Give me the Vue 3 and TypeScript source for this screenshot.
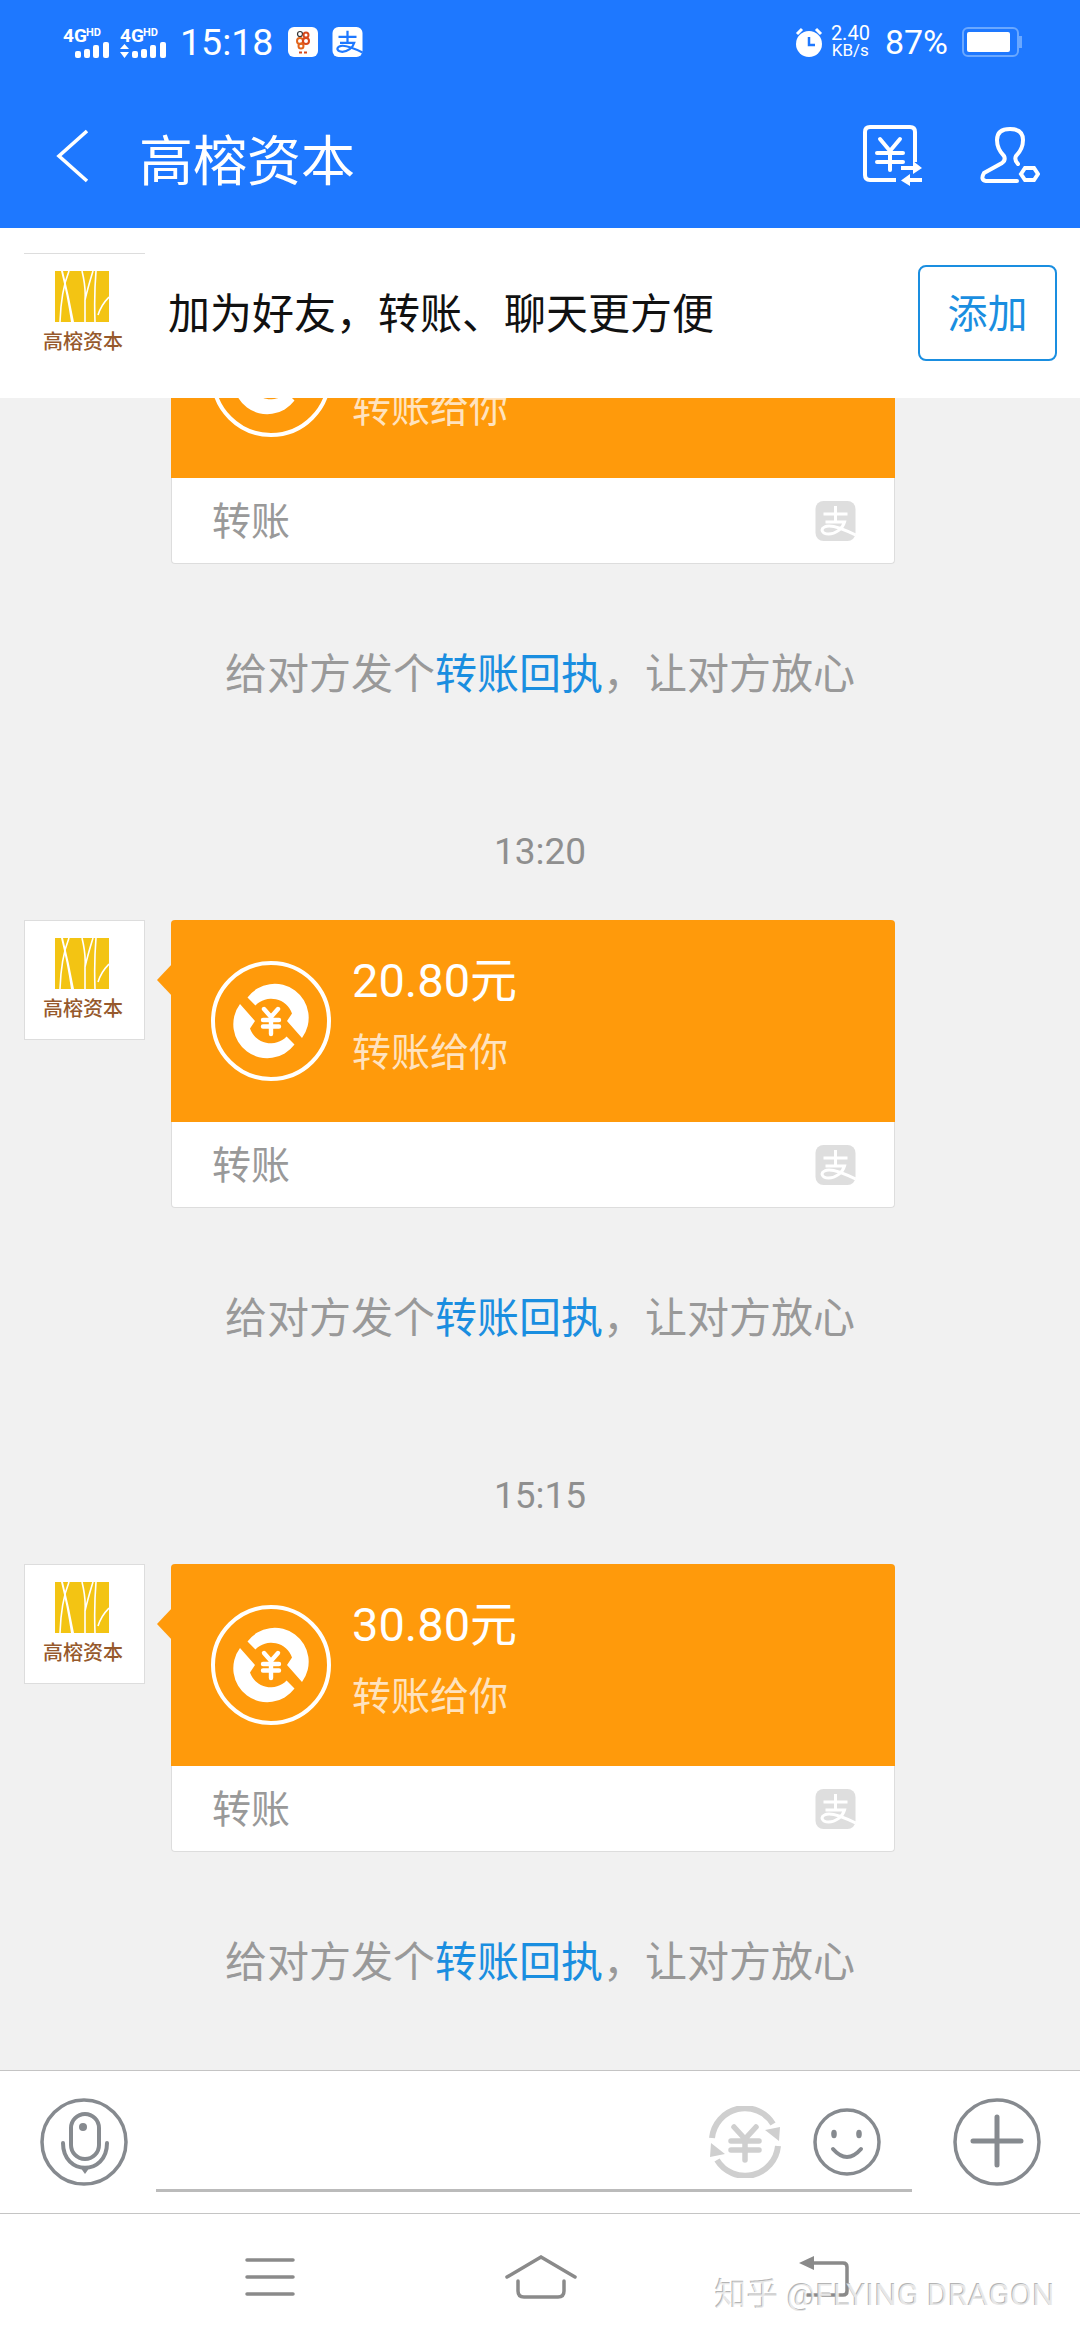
<script setup lang="ts">
interface Transfer {
  time?: string;
  amount: string;
}

const transfers: Transfer[] = [
  { amount: "" }, // scrolled away under the banner
  { time: "13:20", amount: "20.80元" },
  { time: "15:15", amount: "30.80元" },
];
</script>

<template>
  <div class="page">
    <svg class="defs" width="0" height="0">
      <symbol id="logo" viewBox="0 0 54 51">
        <rect width="54" height="51" fill="#f3c413" />
        <path
          d="M14 0Q6 20 5 51M27 0Q31 16 30 29V51M38 0Q33 16 30 29M41 0Q39 24 40 51M54 26Q46 34 43 44"
          fill="none"
          stroke="#fff"
          stroke-width="1.6"
        />
        <path d="M6 0Q12 24 16 51H19Q14 24 8 0Z" fill="#fff" />
      </symbol>
      <symbol id="alipay" viewBox="0 0 40 40">
        <rect width="40" height="40" rx="8" fill="currentColor" />
        <path
          d="M8 13H32M20 5V21M10 21H29C27 28 20 33 13 33C6 33 5 28 9 26C14 23 24 26 40 34"
          fill="none"
          stroke="var(--glyph)"
          stroke-width="3"
        />
      </symbol>
      <symbol id="transfer" viewBox="0 0 120 120">
        <circle cx="60" cy="60" r="58" fill="none" stroke="#fff" stroke-width="4" />
        <g id="half">
          <path d="M36.5 36.5A33 33 0 0 1 91 77L76 60L81 52.500A22 22 0 0 0 44.400 44.400Z" fill="#fff" />
        </g>
        <use href="#half" transform="rotate(180 60 60)" />
        <path
          d="M53 48L60 56L67 48M52 59H68M52 65.500H68M60 56V73"
          fill="none"
          stroke="#fff"
          stroke-width="4.4"
          stroke-linecap="round"
        />
      </symbol>
    </svg>

    <header class="topbar">
      <div class="status">
        <div class="status-left">
          <svg class="signal" viewBox="0 0 47 31" width="47" height="31">
            <text x="0" y="15" class="net">4G</text>
            <text x="23" y="9" class="hd">HD</text>
            <g fill="#fff">
              <rect x="12" y="24" width="6" height="7" rx="2" />
              <rect x="21" y="22" width="6" height="9" rx="2" />
              <rect x="30" y="18" width="6" height="13" rx="2" />
              <rect x="40" y="15" width="6" height="16" rx="2" />
            </g>
          </svg>
          <svg class="signal" viewBox="0 0 47 31" width="47" height="31">
            <text x="0" y="15" class="net">4G</text>
            <text x="23" y="9" class="hd">HD</text>
            <path d="M0 22l4.500-5 4.500 5zM0 25l4.500 6 4.500-6z" fill="#fff" />
            <g fill="#fff">
              <rect x="12" y="24" width="6" height="7" rx="2" />
              <rect x="21" y="22" width="6" height="9" rx="2" />
              <rect x="30" y="18" width="6" height="13" rx="2" />
              <rect x="40" y="15" width="6" height="16" rx="2" />
            </g>
          </svg>
          <span class="clock">15:18</span>
          <svg class="app-icon" viewBox="0 0 30 30" width="30" height="30">
            <rect width="30" height="30" rx="6" fill="#fff" />
            <g fill="none" stroke-width="2">
              <circle cx="12" cy="7" r="2.500" stroke="#333" stroke-width="1.200" />
              <circle cx="18" cy="8" r="2.500" stroke="#d8481a" />
              <circle cx="12" cy="14" r="3" stroke="#e2641b" />
              <circle cx="18" cy="14" r="3" stroke="#d8481a" />
              <circle cx="13" cy="19" r="2.500" stroke="#e2641b" />
            </g>
            <path d="M11 25.500h3M16 25.500h3" stroke="#d8481a" stroke-width="2" />
          </svg>
          <svg class="app-icon alipay-white" width="31" height="30"><use href="#alipay" /></svg>
        </div>
        <div class="status-right">
          <svg viewBox="0 0 30 30" width="30" height="30">
            <path d="M3 7L8 2M27 7L22 2" stroke="#fff" stroke-width="3" />
            <circle cx="15" cy="17" r="13" fill="#fff" />
            <path d="M15 10V18H21" fill="none" stroke="#1e78ff" stroke-width="2.500" />
          </svg>
          <div class="speed">
            <span>2.40</span>
            <span class="speed-unit">KB/s</span>
          </div>
          <span class="battery-text">87%</span>
          <div class="battery">
            <div class="battery-fill"></div>
          </div>
        </div>
      </div>
      <div class="navbar">
        <svg class="back" viewBox="0 0 34 54" width="34" height="54">
          <path d="M32 2L4 27L32 52" fill="none" stroke="#fff" stroke-width="3.600" />
        </svg>
        <h1 class="title">高榕资本</h1>
        <svg class="nav-icon" viewBox="0 0 60 62" width="60" height="62">
          <path
            d="M33 55H7Q2 55 2 50V7Q2 2 7 2H47Q52 2 52 7V37"
            fill="none"
            stroke="#fff"
            stroke-width="4"
          />
          <path
            d="M17 14L27 26L37 14M14 28H40M14 37H40M27 26V45"
            fill="none"
            stroke="#fff"
            stroke-width="4"
            stroke-linecap="round"
          />
          <path d="M38 41H50V36L59 43L50 49V45H38zM59 53H47V49L38 55.500L47 61V57H59z" fill="#fff" />
        </svg>
        <svg class="nav-icon person" viewBox="0 0 60 58" width="60" height="58">
          <path
            d="M38 37Q34 33 36 29Q43 22 43 13Q43 2 30 2Q17 2 17 13Q17 22 24 29Q26 33 22 36L4 46Q0 53 6 54H37"
            fill="none"
            stroke="#fff"
            stroke-width="4"
            stroke-linecap="round"
          />
          <path d="M41 47L45 41H54L58 47L54 53H45Z" fill="none" stroke="#fff" stroke-width="4" />
        </svg>
      </div>
    </header>

    <section class="banner">
      <div class="avatar avatar-bare">
        <svg class="logo-mark" width="54" height="51"><use href="#logo" /></svg>
        <span class="logo-name">高榕资本</span>
      </div>
      <span class="banner-text">加为好友，转账、聊天更方便</span>
      <button class="add-btn" type="button">添加</button>
    </section>

    <main class="chat">
      <div class="chat-list">
        <article v-for="(item, i) in transfers" :key="i" class="group">
          <div v-if="item.time" class="time">{{ item.time }}</div>
          <div class="message">
            <div class="avatar">
              <template v-if="item.time">
                <svg class="logo-mark" width="54" height="51"><use href="#logo" /></svg>
                <span class="logo-name">高榕资本</span>
              </template>
            </div>
            <div class="card">
              <div class="card-main">
                <svg class="card-icon" width="120" height="120"><use href="#transfer" /></svg>
                <div class="card-info">
                  <span class="amount">{{ item.amount }}</span>
                  <span class="card-desc">转账给你</span>
                </div>
              </div>
              <div class="card-foot">
                <span class="foot-label">转账</span>
                <svg class="alipay-grey" width="41" height="40"><use href="#alipay" /></svg>
              </div>
            </div>
          </div>
          <p class="hint">给对方发个<span class="hint-link">转账回执</span>，让对方放心</p>
        </article>
      </div>
    </main>

    <section class="composer">
      <svg viewBox="0 0 88 88" width="88" height="88">
        <circle cx="44" cy="44" r="42" fill="none" stroke="#868a8f" stroke-width="3.500" />
        <rect x="31" y="16" width="28" height="45" rx="14" fill="none" stroke="#868a8f" stroke-width="4" />
        <circle cx="43" cy="29" r="4" fill="#868a8f" />
        <path d="M23 45C23 78 67 78 67 45" fill="none" stroke="#868a8f" stroke-width="4" stroke-linecap="round" />
        <path d="M40 69H50L45 76Z" fill="#868a8f" />
      </svg>
      <div class="input-box">
        <svg viewBox="0 0 72 72" width="72" height="72">
          <path d="M3 32A33 33 0 0 1 64 18" fill="none" stroke="#cfcfcf" stroke-width="6" />
          <path d="M69 40A33 33 0 0 1 8 54" fill="none" stroke="#cfcfcf" stroke-width="6" />
          <path d="M56 24L71 21L70 35ZM16 48L1 51L2 37Z" fill="#cfcfcf" />
          <path
            d="M25 21L36 33L47 21M22 35H50M22 44H50M36 33V54"
            fill="none"
            stroke="#cfcfcf"
            stroke-width="5.500"
            stroke-linecap="round"
          />
        </svg>
        <svg viewBox="0 0 68 68" width="68" height="68">
          <circle cx="34" cy="34" r="32" fill="none" stroke="#868a8f" stroke-width="3.500" />
          <ellipse cx="21" cy="26" rx="2.800" ry="4.200" fill="#868a8f" />
          <ellipse cx="46" cy="26" rx="2.800" ry="4.200" fill="#868a8f" />
          <path d="M20 41Q34 57 48 41" fill="none" stroke="#868a8f" stroke-width="4" stroke-linecap="round" />
        </svg>
      </div>
      <svg viewBox="0 0 88 88" width="88" height="88">
        <circle cx="44" cy="44" r="42" fill="none" stroke="#868a8f" stroke-width="3.500" />
        <path d="M20 43H68M44 19V67" stroke="#868a8f" stroke-width="5" stroke-linecap="round" />
      </svg>
    </section>

    <nav class="softkeys">
      <svg viewBox="0 0 50 40" width="50" height="40">
        <path d="M2 3H48M2 20H48M2 37H48" stroke="#8a8a8a" stroke-width="3.500" stroke-linecap="round" />
      </svg>
      <svg viewBox="0 0 72 44" width="72" height="44">
        <path d="M2 22L36 2L70 22" fill="none" stroke="#8a8a8a" stroke-width="3.500" stroke-linecap="round" />
        <path d="M13 26V36Q13 42 19 42H53Q59 42 59 36V26" fill="none" stroke="#8a8a8a" stroke-width="3.500" stroke-linecap="round" />
      </svg>
      <svg class="key-back" viewBox="0 0 50 42" width="50" height="42">
        <path d="M0 7L15 0V14Z" fill="#8a8a8a" />
        <path d="M10 7H44Q48 7 48 11V35Q48 39 44 39H8" fill="none" stroke="#8a8a8a" stroke-width="3.500" stroke-linecap="round" />
      </svg>
    </nav>

    <div class="watermark">知乎 @FLYING DRAGON</div>
  </div>
</template>

<style>
html,
body {
  margin: 0;
  background: #f1f1f1;
}
</style>

<style scoped>
.page {
  position: relative;
  display: flex;
  flex-direction: column;
  width: 1080px;
  height: 2340px;
  overflow: hidden;
  background: #f1f1f1;
  font-family: Roboto, "Noto Sans CJK SC", sans-serif;
}

.defs {
  position: absolute;
}

.topbar {
  flex: none;
  height: 228px;
  background: #1e78ff;
  color: #fff;
}

.status {
  display: flex;
  justify-content: space-between;
  align-items: center;
  height: 84px;
  padding: 0 61px 0 63px;
}

.status-left,
.status-right {
  display: flex;
  align-items: center;
}

.signal {
  margin-right: 10px;
  overflow: visible;
}

.net {
  font: 700 19px Roboto, sans-serif;
  fill: #fff;
}

.hd {
  font: 700 11px Roboto, sans-serif;
  fill: #fff;
}

.clock {
  margin: 0 15px 0 3px;
  font-size: 37.5px;
}

.app-icon {
  margin-right: 14px;
}

.alipay-white {
  color: #fff;
  --glyph: #1e78ff;
}

.speed {
  display: flex;
  flex-direction: column;
  align-items: center;
  margin: 0 15px 0 7px;
  font-size: 20px;
  line-height: 17px;
}

.speed-unit {
  font-size: 17px;
}

.battery-text {
  margin-right: 14px;
  font-size: 34px;
}

.battery {
  position: relative;
  box-sizing: border-box;
  width: 57px;
  height: 30px;
  padding: 3px;
  border: 2px solid #6aa8ff;
  border-radius: 6px;
}

.battery::after {
  content: "";
  position: absolute;
  top: 7px;
  right: -5px;
  width: 3px;
  height: 12px;
  background: #6aa8ff;
}

.battery-fill {
  width: 43px;
  height: 100%;
  background: #fff;
  border-radius: 2px;
}

.navbar {
  display: flex;
  align-items: center;
  height: 144px;
  padding-left: 55px;
}

.back {
  flex: none;
}

.title {
  flex: 1;
  margin: 2px 0 0 50px;
  font-size: 54px;
  font-weight: 400;
}

.nav-icon {
  flex: none;
  margin-right: 57px;
}

.person {
  margin-right: 40px;
}

.banner {
  flex: none;
  z-index: 1;
  display: flex;
  align-items: center;
  height: 170px;
  padding: 0 23px 0 24px;
  background: #fff;
}

.avatar {
  flex: none;
  display: flex;
  flex-direction: column;
  align-items: center;
  box-sizing: border-box;
  width: 121px;
  height: 120px;
  padding: 17px 3px 0 0;
  background: #fff;
  border: 1px solid #ddd;
}

.avatar-bare {
  align-self: flex-start;
  margin-top: 25px;
  border-width: 1px 0 0;
}

.logo-mark {
  display: block;
  margin-right: 2px;
}

.logo-name {
  margin-top: 7px;
  font: 500 20px/24px "Noto Sans CJK SC", serif;
  color: #96592c;
}

.banner-text {
  flex: 1;
  margin: 0 0 6px 23px;
  font-size: 42px;
  color: #111;
}

.add-btn {
  box-sizing: border-box;
  width: 139px;
  height: 96px;
  padding: 0 0 4px;
  font-family: inherit;
  font-size: 40px;
  color: #1a8ee0;
  background: #fff;
  border: 2px solid #1a8ee0;
  border-radius: 8px;
}

.chat {
  flex: 1;
  min-height: 0;
  overflow: hidden;
}

.chat-list {
  margin-top: -122px;
}

.message {
  display: flex;
  align-items: flex-start;
  padding-left: 24px;
}

.card {
  position: relative;
  box-sizing: border-box;
  width: 724px;
  height: 288px;
  margin-left: 26px;
  background: #fff;
  border: 1px solid #ddd;
  border-top: 0;
  border-radius: 4px;
}

.card::before {
  content: "";
  position: absolute;
  top: 43px;
  left: -15px;
  width: 0;
  height: 0;
  border: solid transparent;
  border-width: 17px 16px 17px 0;
  border-right-color: #ff9a0b;
}

.card-main {
  display: flex;
  align-items: flex-start;
  height: 202px;
  margin: 0 -1px;
  padding-left: 40px;
  background: #ff9a0b;
  border-radius: 4px 4px 0 0;
}

.card-icon {
  flex: none;
  margin-top: 41px;
}

.card-info {
  display: flex;
  flex-direction: column;
  margin-left: 21px;
  padding-top: 30px;
}

.amount {
  height: 62px;
  font-size: 47px;
  line-height: 62px;
  color: #fff;
}

.card-desc {
  height: 48px;
  margin-top: 17px;
  font-size: 39px;
  line-height: 48px;
  color: #ffe3bf;
}

.card-foot {
  display: flex;
  justify-content: space-between;
  align-items: center;
  height: 85px;
  padding: 0 38px 0 40px;
  font-size: 39px;
  color: #999;
}

.foot-label {
  margin-bottom: 6px;
}

.alipay-grey {
  color: #dedede;
  --glyph: #fff;
}

.hint {
  margin: 87px 0 131px;
  font-size: 42px;
  line-height: 48px;
  text-align: center;
  color: #999;
}

.hint-link {
  color: #1a8ee0;
}

.time {
  margin-bottom: 46px;
  font-size: 37px;
  line-height: 44px;
  text-align: center;
  color: #8f8f8f;
}

.composer {
  flex: none;
  display: flex;
  align-items: center;
  box-sizing: border-box;
  height: 144px;
  padding: 0 39px 0 40px;
  background: #fff;
  border-top: 1.5px solid #c4c4c4;
  border-bottom: 1.5px solid #c4c4c4;
}

.input-box {
  flex: 1;
  align-self: stretch;
  display: flex;
  justify-content: flex-end;
  align-items: center;
  gap: 32px;
  margin: 0 41px 21px 28px;
  padding: 24px 31px 0 0;
  border-bottom: 3px solid #bbb;
}

.softkeys {
  flex: none;
  display: flex;
  align-items: center;
  gap: 210px;
  height: 126px;
  padding-left: 245px;
  background: #fff;
}

.key-back {
  margin-left: 12px;
}

.watermark {
  position: absolute;
  top: 2276px;
  left: 715px;
  font-size: 32px;
  line-height: 38px;
  white-space: nowrap;
  color: rgba(255, 255, 255, 0.7);
  text-shadow: -1px -1px 0 #b5b5b5;
}
</style>
